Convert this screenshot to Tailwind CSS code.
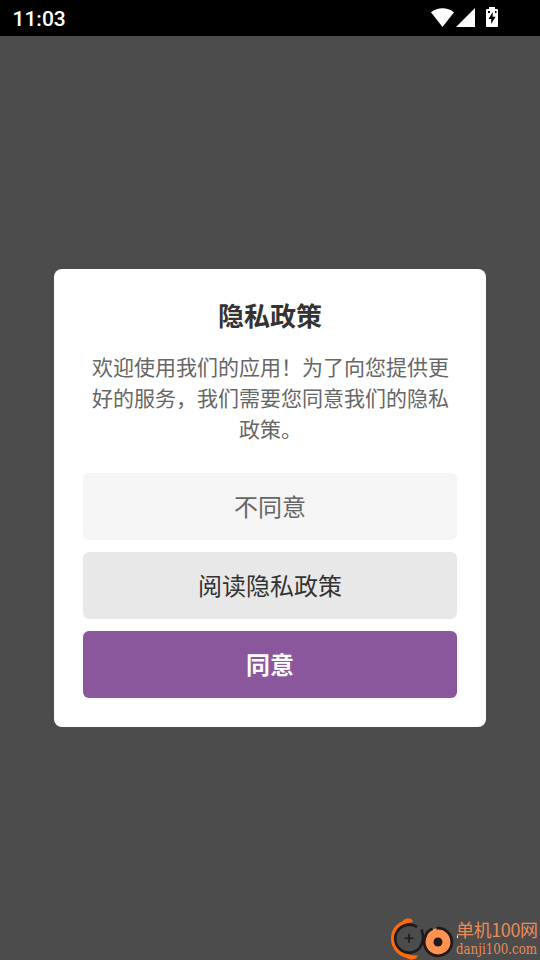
<!DOCTYPE html>
<html lang="zh-CN">
<head>
<meta charset="utf-8">
<meta name="viewport" content="width=device-width, initial-scale=1">
<title>隐私政策</title>
<script src="https://cdn.jsdelivr.net/npm/@tailwindcss/browser@4"></script>
</head>
<body class="relative flex h-[960px] w-[540px] flex-col overflow-hidden bg-[#4c4c4c] font-['Noto_Sans_CJK_SC',sans-serif]">
  <header class="flex h-9 shrink-0 items-center justify-between bg-black pl-[12.5px] pr-[42px] text-white">
    <span class="pt-[2px] font-['Roboto',sans-serif] text-[21px] leading-6 font-medium">11:03</span>
    <svg class="h-9 w-[68px]" viewBox="430 0 68 36" fill="#fff" aria-hidden="true">
      <path d="M431 12.2C437.500 6.900 447.500 6.900 454 12.200L442.500 27Z"/>
      <path d="M475 8V27H456Z"/>
      <path fill-rule="evenodd" d="M489 7H495V9H497Q498 9 498 10V26Q498 27 497 27H487Q486 27 486 26V10Q486 9 487 9H489ZM492.700 12L488.500 19H491.200V24L495.600 16.700H492.700ZM488 11V13H490V11ZM495 11V13H496.500V11Z"/>
    </svg>
  </header>

  <main class="flex grow flex-col items-center pt-[233px]">
    <section class="flex h-[458px] w-[432px] flex-col rounded-lg bg-white px-[29px] pt-[27px] pb-[29px] text-center">
      <h1 class="h-[37px] text-[26px] leading-[37px] font-bold text-[#333]">隐私政策</h1>
      <p class="mt-[18px] pl-[9px] pr-[8px] text-[21px] leading-[31px] text-[#666]">欢迎使用我们的应用！为了向您提供更<br>好的服务，我们需要您同意我们的隐私<br>政策。</p>
      <div class="mt-auto flex flex-col gap-3 text-2xl">
        <button class="h-[67px] rounded-md bg-[#f5f5f5] pb-[2px] text-[#666]">不同意</button>
        <button class="h-[67px] rounded-md bg-[#e8e8e8] pb-[2px] text-[#333]">阅读隐私政策</button>
        <button class="h-[67px] rounded-md bg-[#8a569c] pb-[2px] font-bold text-white">同意</button>
      </div>
    </section>
  </main>

  <svg class="absolute bottom-0 right-0 h-[50px] w-[155px]" viewBox="385 910 155 50">
    <path d="M413 922L411.500 919L407.500 918.200Q404 919 402 921.500C395 924.500 391 931 391 938.500C391 947.500 397 955 405 957.500L411 959.800L416 958.500L418 955.500C404 956 395.500 949 395.500 938.500C395.500 930 400 924 413 922Z" fill="#ff6b08"/>
    <path d="M417 927A14 14 0 1 0 419.500 948.200Q425.500 940 421.500 929.500" fill="none" stroke="#211a1b" stroke-width="2.700"/>
    <path d="M404.500 938.300H413.500M409 933.800V942.800" stroke="#211a1b" stroke-width="1.600"/>
    <circle cx="438" cy="942" r="13.700" fill="#ff924e"/>
    <path d="M436.500 928.300A13.800 13.800 0 1 1 425.500 936.200Q426.500 931.500 432.500 928.800" fill="none" stroke="#211a1b" stroke-width="2.800"/>
    <circle cx="438" cy="942" r="4.500" fill="#211a1b"/>
    <path d="M457.500 935.500V938" stroke="#fff"/>
    <g fill="#e98b57">
      <text x="456" y="937" font-size="18" textLength="82" lengthAdjust="spacing" font-family="'Noto Sans CJK SC',sans-serif">单机100网</text>
      <text x="456" y="954" font-size="14" textLength="81" lengthAdjust="spacingAndGlyphs" font-family="'DejaVu Serif',serif">danji100.com</text>
    </g>
  </svg>
</body>
</html>
